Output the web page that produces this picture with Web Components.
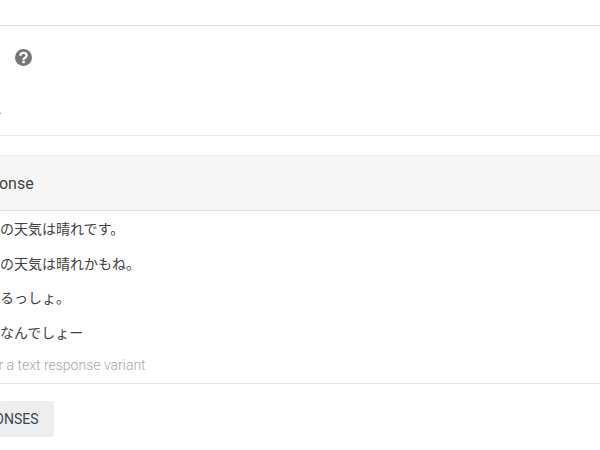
<!DOCTYPE html>
<html>
<head>
<meta charset="utf-8">
<title>Text response</title>
<style>
html, body { margin: 0; padding: 0; height: 100%; overflow: hidden; background: #fff; }
body { font-family: Roboto, "Noto Sans CJK JP", sans-serif; }
</style>
</head>
<body>
<response-page>
    <help-row></help-row>
    <response-card title-text="Text Response">
        <response-row>今日の天気は晴れです。</response-row>
        <response-row>今日の天気は晴れかもね。</response-row>
        <response-row>晴れるっしょ。</response-row>
        <response-row>そうなんでしょー</response-row>
    </response-card>
    <add-button>ADD RESPONSES</add-button>
</response-page>
<script>
class ResponsePage extends HTMLElement {
    constructor() {
        super();
        this.attachShadow({mode: "open"});
        this.shadowRoot.innerHTML = `
            <style>
                :host { display: flex; flex-direction: column; width: 600px; height: 450px; overflow: hidden; box-sizing: border-box; padding-top: 25px; }
            </style>
            <slot></slot>
        `;
    }
}

class HelpRow extends HTMLElement {
    constructor() {
        super();
        this.attachShadow({mode: "open"});
        this.shadowRoot.innerHTML = `
            <style>
                :host { display: flex; flex-direction: column; height: 111px; box-sizing: border-box; border-top: 1px solid #dcdcdc; border-bottom: 1px solid #e8e8e8; }
                .icon { display: flex; padding: 23px 0 0 15px; height: 16px; }
                svg { width: 17px; height: 17px; display: block; }
                .note { margin-top: 36px; height: 16px; line-height: 16px; font-size: 14px; color: #3b6fc4; margin-left: -2px; }
            </style>
            <div class="icon">
                <svg viewBox="0 0 24 24"><circle cx="12" cy="12" r="12" fill="#757575"/><path fill="none" stroke="#fff" stroke-width="3.2" d="M7.6 9.4c0-2.5 2-4 4.4-4s4.4 1.5 4.4 3.7c0 3.4-4.4 3-4.4 6.3"/><rect x="10.2" y="16.6" width="3.6" height="3.4" fill="#fff"/></svg>
            </div>
            <div class="note">.</div>
        `;
    }
}

class ResponseCard extends HTMLElement {
    constructor() {
        super();
        this.attachShadow({mode: "open"});
        this.shadowRoot.innerHTML = `
            <style>
                :host { display: flex; flex-direction: column; margin-top: 19px; }
                .head { height: 56px; box-sizing: border-box; background: #f6f6f6; border-top: 1px solid #ececec; border-bottom: 1px solid #e0e0e0; display: flex; align-items: center; font-size: 16px; color: #424242; overflow: hidden; }
                .head span { margin-left: -71px; white-space: nowrap; }
                .rows { display: flex; flex-direction: column; padding-top: 1px; }
                .input { height: 33.6px; box-sizing: border-box; border-bottom: 1px solid #e4e4e4; font-size: 14px; font-weight: 300; color: #a8a8a8; line-height: 30px; }
                .input span { margin-left: -29px; white-space: nowrap; }
            </style>
            <div class="head"><span id="t"></span></div>
            <div class="rows"><slot></slot></div>
            <div class="input"><span>Enter a text response variant</span></div>
        `;
    }
    connectedCallback() {
        this.shadowRoot.getElementById("t").textContent = this.getAttribute("title-text");
    }
}

class ResponseRow extends HTMLElement {
    constructor() {
        super();
        this.attachShadow({mode: "open"});
        this.shadowRoot.innerHTML = `
            <style>
                :host { display: block; height: 34.6px; line-height: 34.6px; font-size: 14px; color: #424242; white-space: nowrap; margin-left: -28px; }
            </style>
            <slot></slot>
        `;
    }
}

class AddButton extends HTMLElement {
    constructor() {
        super();
        this.attachShadow({mode: "open"});
        this.shadowRoot.innerHTML = `
            <style>
                :host { display: flex; align-items: center; justify-content: flex-end; width: 54px; height: 36px; margin-top: 17px; background: #eeeeee; border-radius: 2px; font-size: 14px; font-weight: 400; color: #37474f; overflow: hidden; white-space: nowrap; box-sizing: border-box; padding-right: 15.5px; }
            </style>
            <slot></slot>
        `;
    }
}

customElements.define("response-page", ResponsePage);
customElements.define("help-row", HelpRow);
customElements.define("response-card", ResponseCard);
customElements.define("response-row", ResponseRow);
customElements.define("add-button", AddButton);
</script>
</body>
</html>
